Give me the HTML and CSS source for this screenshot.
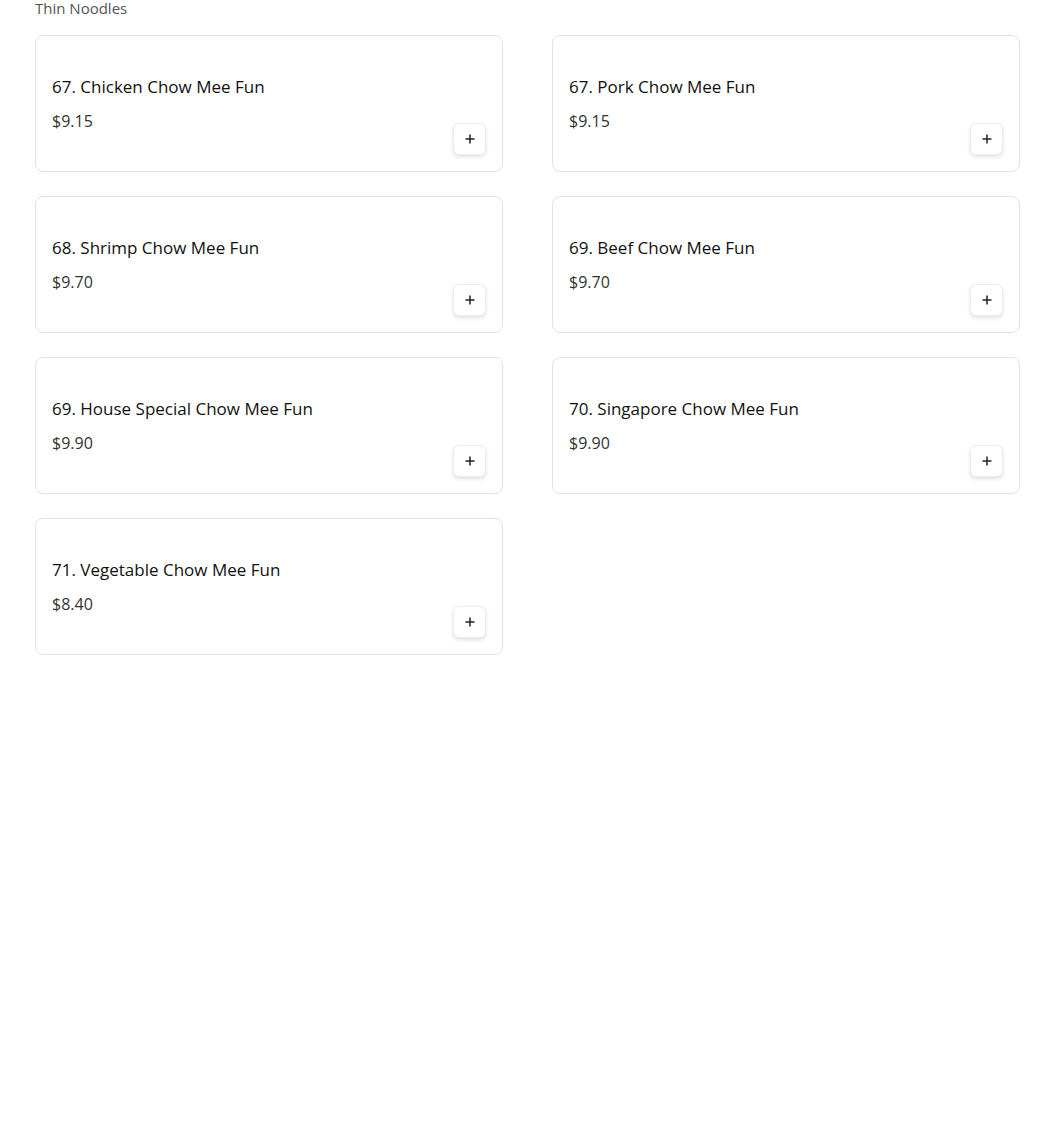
FILE: index.html
```html
<!DOCTYPE html>
<html lang="en">
<head>
<meta charset="UTF-8">
<meta name="viewport" content="width=device-width, initial-scale=1.0">
<title>Thin Noodles</title>
<link rel="stylesheet" href="styles.css">
</head>
<body>

<div class="section">
    <div class="section-title">Thin Noodles</div>

    <div class="menu-grid">
        <div class="item">
            <div class="info">
                <div class="name">67. Chicken Chow Mee Fun</div>
                <div class="price">$9.15</div>
            </div>
            <button class="add" aria-label="Add">
                <svg width="12" height="12" viewBox="0 0 12 12"><path d="M6 1.5v9M1.5 6h9" stroke="#222" stroke-width="1.5"/></svg>
            </button>
        </div>

        <div class="item">
            <div class="info">
                <div class="name">67. Pork Chow Mee Fun</div>
                <div class="price">$9.15</div>
            </div>
            <button class="add" aria-label="Add">
                <svg width="12" height="12" viewBox="0 0 12 12"><path d="M6 1.5v9M1.5 6h9" stroke="#222" stroke-width="1.5"/></svg>
            </button>
        </div>

        <div class="item">
            <div class="info">
                <div class="name">68. Shrimp Chow Mee Fun</div>
                <div class="price">$9.70</div>
            </div>
            <button class="add" aria-label="Add">
                <svg width="12" height="12" viewBox="0 0 12 12"><path d="M6 1.5v9M1.5 6h9" stroke="#222" stroke-width="1.5"/></svg>
            </button>
        </div>

        <div class="item">
            <div class="info">
                <div class="name">69. Beef Chow Mee Fun</div>
                <div class="price">$9.70</div>
            </div>
            <button class="add" aria-label="Add">
                <svg width="12" height="12" viewBox="0 0 12 12"><path d="M6 1.5v9M1.5 6h9" stroke="#222" stroke-width="1.5"/></svg>
            </button>
        </div>

        <div class="item">
            <div class="info">
                <div class="name">69. House Special Chow Mee Fun</div>
                <div class="price">$9.90</div>
            </div>
            <button class="add" aria-label="Add">
                <svg width="12" height="12" viewBox="0 0 12 12"><path d="M6 1.5v9M1.5 6h9" stroke="#222" stroke-width="1.5"/></svg>
            </button>
        </div>

        <div class="item">
            <div class="info">
                <div class="name">70. Singapore Chow Mee Fun</div>
                <div class="price">$9.90</div>
            </div>
            <button class="add" aria-label="Add">
                <svg width="12" height="12" viewBox="0 0 12 12"><path d="M6 1.5v9M1.5 6h9" stroke="#222" stroke-width="1.5"/></svg>
            </button>
        </div>

        <div class="item">
            <div class="info">
                <div class="name">71. Vegetable Chow Mee Fun</div>
                <div class="price">$8.40</div>
            </div>
            <button class="add" aria-label="Add">
                <svg width="12" height="12" viewBox="0 0 12 12"><path d="M6 1.5v9M1.5 6h9" stroke="#222" stroke-width="1.5"/></svg>
            </button>
        </div>
    </div>
</div>

</body>
</html>
```

FILE: styles.css
```css
body {
    margin: 0;
    background: #fff;
    color: #1a1a1a;
    font-family: "Open Sans", "Noto Sans", sans-serif;
}

.section {
    padding: 0 29px 0 35px;
}

.section-title {
    font-size: 15px;
    line-height: 16px;
    color: #555;
    margin-bottom: 19px;
}

.menu-grid {
    display: grid;
    grid-template-columns: 468px 468px;
    column-gap: 49px;
    row-gap: 24px;
}

/* 菜品卡片 */
.item {
    display: flex;
    justify-content: space-between;
    align-items: flex-end;
    height: 137px;
    box-sizing: border-box;
    padding: 16px;
    border: 1px solid #e3e3e3;
    border-radius: 8px;
}

.info {
    padding-bottom: 22px;
}

.name {
    font-size: 17px;
    line-height: 24px;
    font-weight: 500;
    color: #111;
}

.price {
    margin-top: 10px;
    font-size: 16px;
    line-height: 24px;
    color: #333;
}

.add {
    width: 33px;
    height: 32px;
    padding: 0;
    display: flex;
    align-items: center;
    justify-content: center;
    background: #fff;
    border: 1px solid #ececec;
    border-radius: 6px;
    box-shadow: 0 2px 4px rgba(0,0,0,0.12);
    cursor: pointer;
}
```
